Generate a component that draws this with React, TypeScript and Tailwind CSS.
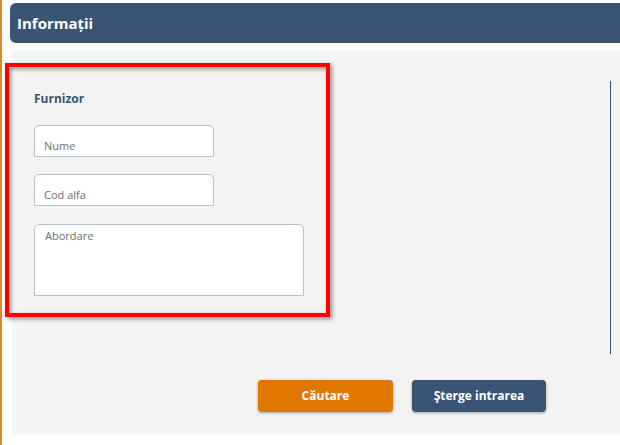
export default function App() {
  return (
    <div className="relative h-[445px] w-full overflow-hidden border-l-2 border-[#d98a2b] bg-white font-['Open_Sans',sans-serif]">
      {/* Header */}
      <div className="ml-[8px] mt-[3px] flex h-[40px] items-center rounded-l-[6px] bg-[#3a5473] pl-[7px]">
        <h1 className="text-[15px] font-bold leading-none text-white">Informații</h1>
      </div>

      {/* Outer panel */}
      <div className="ml-[10px] mt-[7px] h-[385px] rounded-bl-[4px] bg-[#f4f5f7] pl-[12px] pt-[12px]">
        {/* Inner panel */}
        <div className="h-[359px] overflow-hidden bg-[#f3f3f3] pt-[19px]">
          <div className="flex">
            <div className="w-[586px] shrink-0 pl-[10px] pt-[10px]">
              <h2 className="text-[12px] font-bold leading-[16px] text-[#3a5473]">Furnizor</h2>

              <input
                placeholder="Nume"
                className="mt-[18px] block h-[32px] w-[180px] rounded-t-[5px] border border-[#b9c1cd] bg-white pl-[9px] pt-[9px] text-[11px] leading-[15px] outline-none placeholder:text-[#6f6f6f]"
              />
              <input
                placeholder="Cod alfa"
                className="mt-[17px] block h-[32px] w-[180px] rounded-t-[5px] border border-[#b9c1cd] bg-white pl-[9px] pt-[9px] text-[11px] leading-[15px] outline-none placeholder:text-[#6f6f6f]"
              />
              <textarea
                placeholder="Abordare"
                className="mt-[18px] block h-[72px] w-[270px] resize-none rounded-t-[5px] border border-[#b9c1cd] bg-white pl-[10px] pt-[3px] text-[11px] leading-[15px] outline-none placeholder:text-[#6f6f6f]"
              />
            </div>
            <div className="h-[273px] w-px shrink-0 bg-[#2f4f70]" />
          </div>

          <div className="ml-[234px] mt-[26px] flex gap-[19px]">
            <button className="h-[32px] w-[135px] rounded-[4px] bg-[#e07800] text-[12px] font-bold text-white shadow-[0_1px_3px_rgba(0,0,0,0.35)]">
              Căutare
            </button>
            <button className="h-[32px] w-[134px] rounded-[4px] bg-[#3a5473] text-[12px] font-bold text-white shadow-[0_1px_3px_rgba(0,0,0,0.35)]">
              Şterge intrarea
            </button>
          </div>
        </div>
      </div>

      {/* Red highlight annotation */}
      <div className="pointer-events-none absolute left-[3px] top-[63px] h-[254px] w-[325px] border-4 border-[#ff0000] drop-shadow-[2px_2px_2px_rgba(0,0,0,0.45)]" />
    </div>
  );
}
